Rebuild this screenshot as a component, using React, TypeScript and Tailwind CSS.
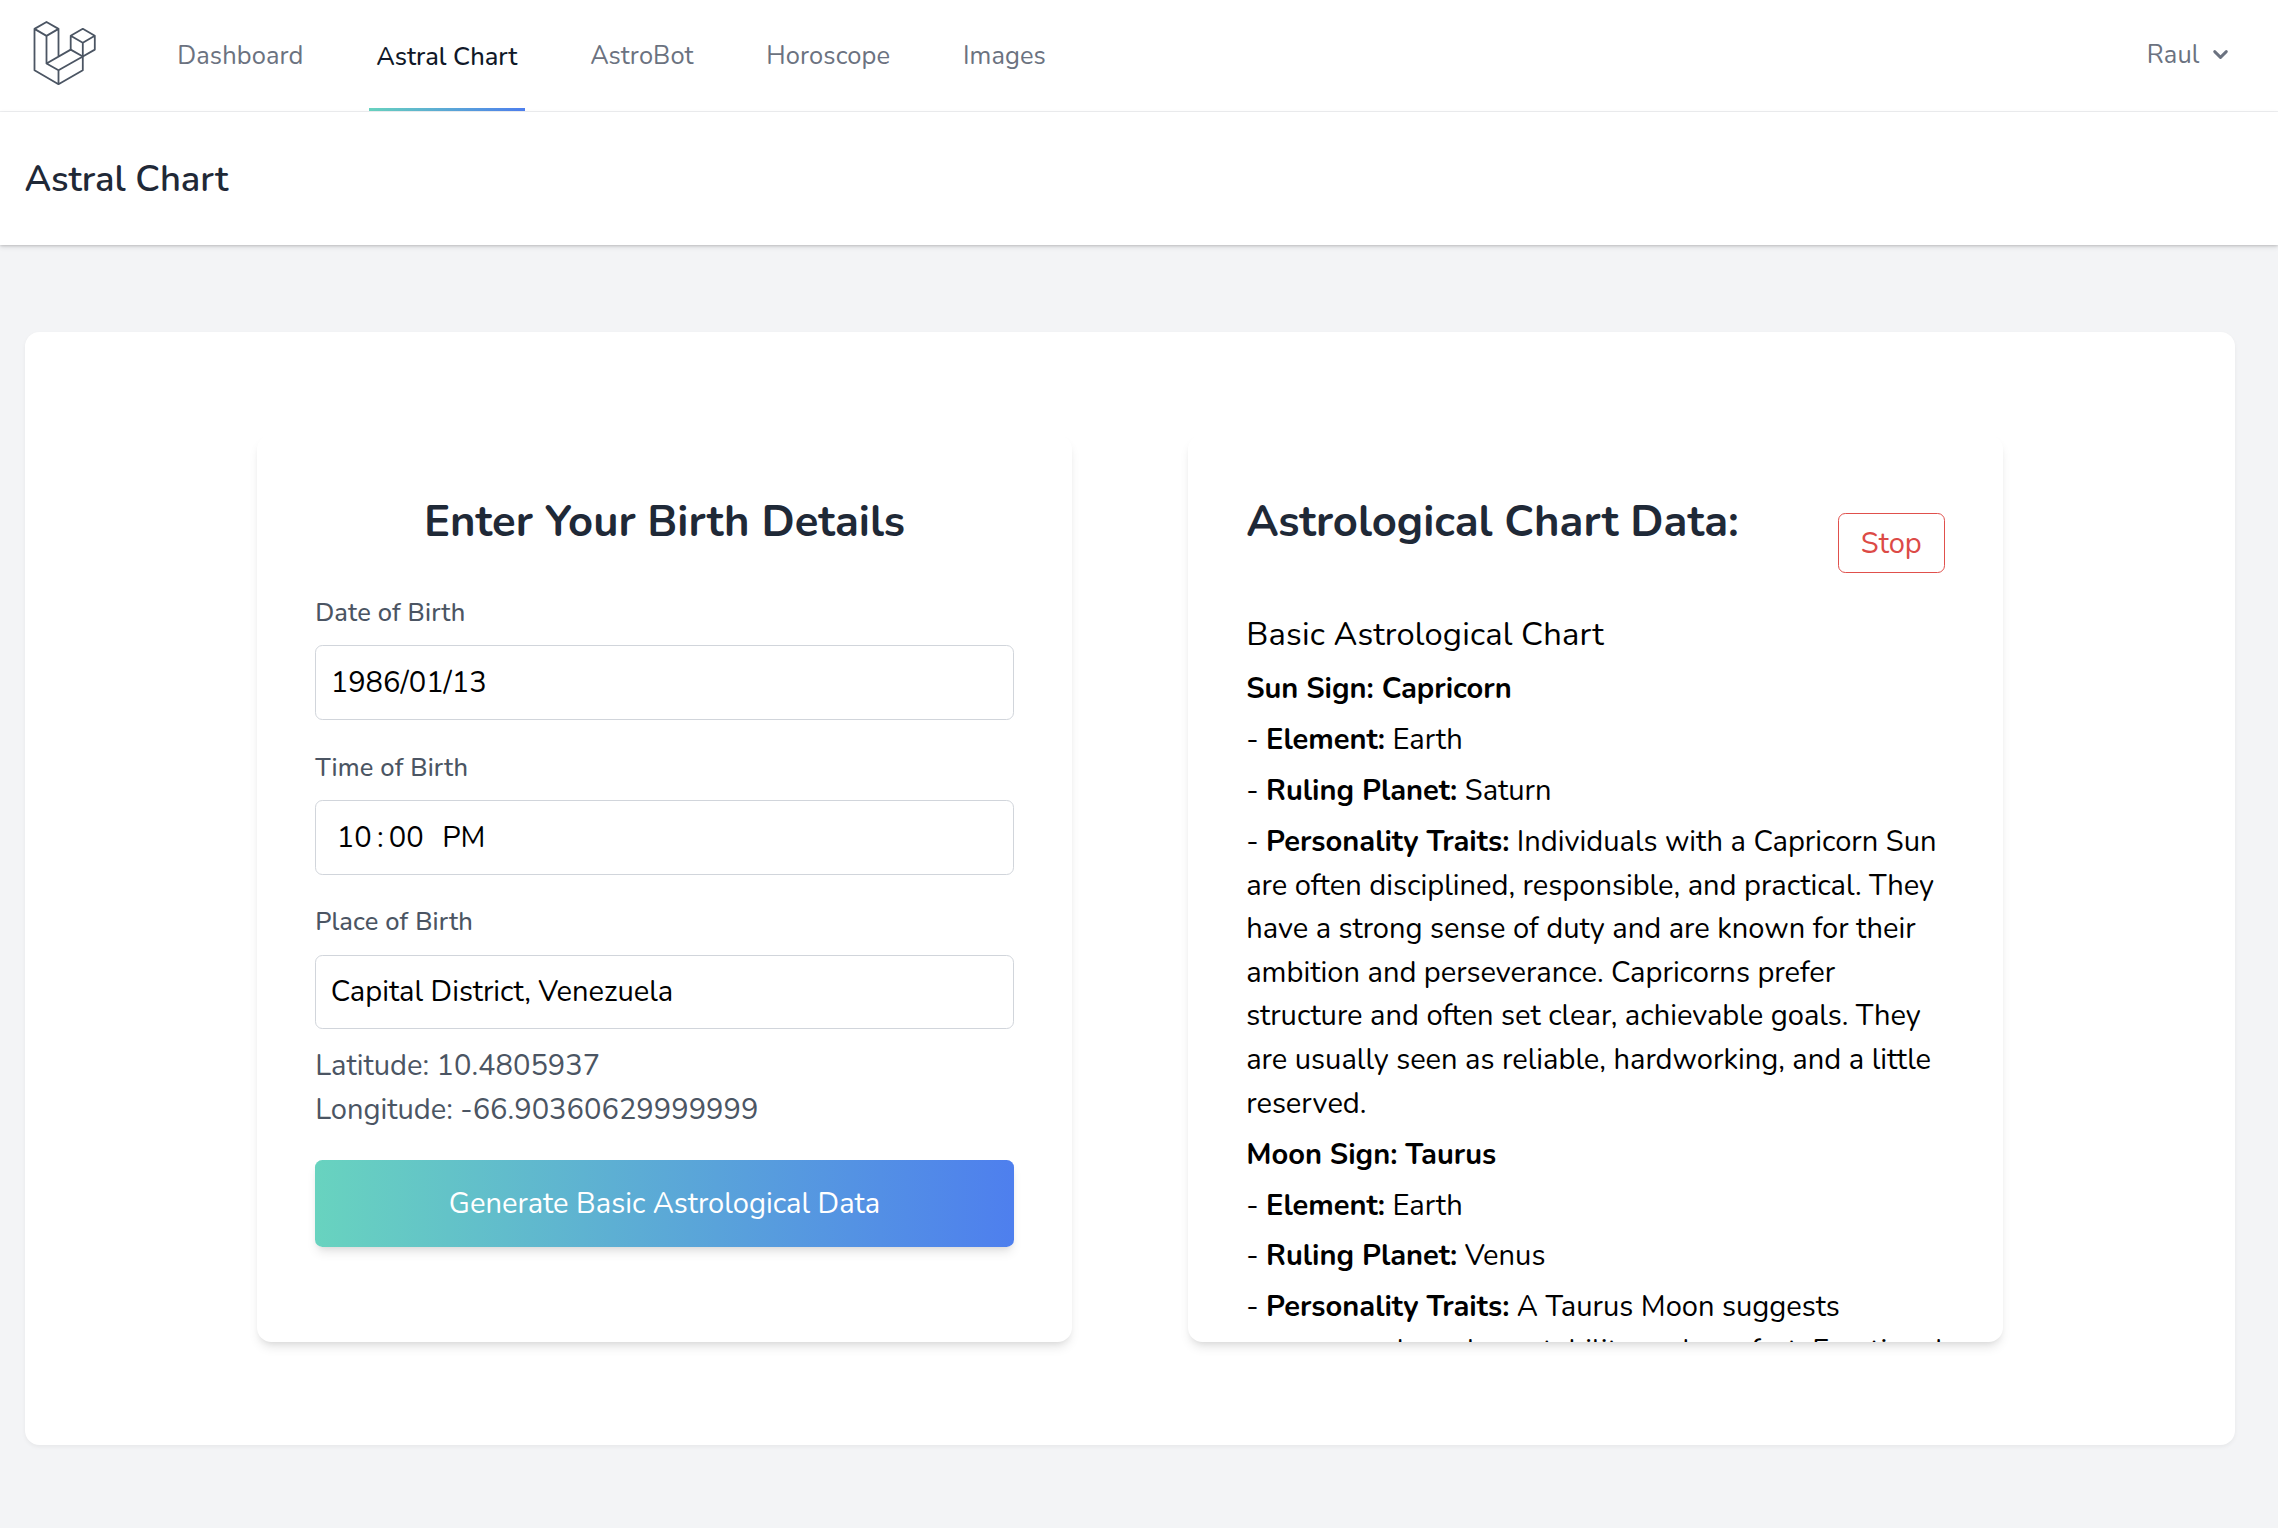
import React from "react";

const links = ["Dashboard", "Astral Chart", "AstroBot", "Horoscope", "Images"];

function Logo() {
  return (
    <svg viewBox="0 0 64 65" className="mb-[5px] ml-[32.5px] h-[65px] w-16 flex-none" fill="none" stroke="#4b5563" strokeWidth="1.8" strokeLinejoin="round">
      <path d="M1.5 7.9 13.5 1 25.5 7.9 13.5 14.9zM1.5 7.9V49.3L25.5 63.2 49.8 49.3V35.5M13.5 14.9V42.5L25.5 49.3V63.2M25.5 7.9V35.5M13.5 42.5 37.7 28.6 49.8 35.5 25.5 49.3" />
      <path d="M37.7 14.7 49.8 7.8 61.8 14.7 49.8 21.7zM37.7 14.7V28.6M49.8 21.7V35.5L61.8 28.6V14.7" />
    </svg>
  );
}

function Chevron() {
  return (
    <svg viewBox="0 0 20 20" className="ml-[6.5px] size-[29px] fill-current">
      <path
        fillRule="evenodd"
        clipRule="evenodd"
        d="M5.293 7.293a1 1 0 011.414 0L10 10.586l3.293-3.293a1 1 0 111.414 1.414l-4 4a1 1 0 01-1.414 0l-4-4a1 1 0 010-1.414z"
      />
    </svg>
  );
}

function NavLink({ label, active }: { label: string; active: boolean }) {
  if (active) {
    return (
      <a className="flex h-full flex-col font-medium text-gray-900">
        <span className="flex flex-1 items-center px-[7.3px] pt-[7px]">{label}</span>
        <span className="h-[3px] bg-linear-to-r/srgb from-[#68d3bf] to-[#4e7fee]" />
      </a>
    );
  }
  return <a className="flex h-full items-center px-[7.3px] pt-[2px] tracking-[0.1px] text-[#6b7280]">{label}</a>;
}

function Field({ label, children }: { label: string; children: React.ReactNode }) {
  return (
    <label className="flex flex-col">
      <span className="mt-[0.7px] mb-[13.8px] text-[25.45px]/[36.4px] font-medium tracking-[0.15px] text-[#4b5563]">{label}</span>
      <span className="flex h-[74.7px] items-center rounded-[7.3px] border border-[#d1d5db] px-[14.5px] pt-[0.5px]">{children}</span>
    </label>
  );
}

function Card({ children }: { children: React.ReactNode }) {
  return (
    <section className="h-[907.5px] w-[815px] overflow-hidden rounded-[14.5px] bg-white px-[58.2px] pt-[58.2px] shadow-[0_7px_11px_-2px_rgba(0,0,0,0.1),0_4px_7px_-4px_rgba(0,0,0,0.1)]">
      {children}
    </section>
  );
}

const signs = [
  {
    title: "Sun Sign: Capricorn",
    element: "Earth",
    planet: "Saturn",
    traits:
      "Individuals with a Capricorn Sun are often disciplined, responsible, and practical. They have a strong sense of duty and are known for their ambition and perseverance. Capricorns prefer structure and often set clear, achievable goals. They are usually seen as reliable, hardworking, and a little reserved.",
  },
  {
    title: "Moon Sign: Taurus",
    element: "Earth",
    planet: "Venus",
    traits: "A Taurus Moon suggests someone who values stability and comfort. Emotional",
  },
];

function Trait({ name, value }: { name: string; value: string }) {
  return (
    <p>
      - <strong>{name}:</strong> {value}
    </p>
  );
}

export default function App() {
  return (
    <div className="h-[1528px] overflow-hidden bg-[#f3f4f6] font-['Nunito','Lato',sans-serif] text-[29.09px]/[43.64px] text-black">
      <nav className="flex h-28 items-center border-b border-[#f0f1f3] bg-white text-[25.45px]/[36.4px]">
        <Logo />
        <div className="ml-[73.5px] flex h-full flex-1 gap-[58.2px]">
          {links.map((l) => (
            <NavLink key={l} label={l} active={l === "Astral Chart"} />
          ))}
        </div>
        <button className="mr-[43px] mb-[3px] flex items-center tracking-[0.12px] text-[#6b7280]">
          <span className="pt-[2px]">Raul</span>
          <Chevron />
        </button>
      </nav>

      <header className="relative flex h-[133px] items-center bg-white pl-[24.5px] shadow-[0_2px_5px_0_rgba(0,0,0,0.12),0_1px_2px_0_rgba(0,0,0,0.12)]">
        <h2 className="text-[36.36px]/[44px] font-semibold text-[#1f2937]">Astral Chart</h2>
      </header>

      <main className="mt-[87px] mr-[43px] ml-[25px] flex h-[1113px] justify-center gap-[116px] rounded-[14.5px] bg-white pt-[102.5px] shadow-[0_2px_4px_0_rgba(0,0,0,0.05)]">
        <Card>
          <h1 className="pt-[0.6px] mb-[43px] text-center text-[43.64px]/[58.2px] font-bold text-[#1f2937]">Enter Your Birth Details</h1>
          <form className="flex flex-col gap-[29px]">
            <Field label="Date of Birth">1986/01/13</Field>
            <Field label="Time of Birth">
              <span className="ml-[6px]">10</span>
              <span className="ml-[5.5px]">:</span>
              <span className="ml-[5px]">00</span>
              <span className="ml-[18.5px]">PM</span>
            </Field>
            <Field label="Place of Birth">Capital District, Venezuela</Field>
          </form>
          <div className="mt-[15px] mb-[28px] text-[#4b5563]">
            <p>Latitude: 10.4805937</p>
            <p>Longitude: -66.90360629999999</p>
          </div>
          <button className="h-[87px] w-full rounded-[7.3px] bg-linear-to-r/srgb from-[#68d3bf] to-[#4e7fee] pt-px text-white shadow-[0_7px_11px_-2px_rgba(0,0,0,0.1),0_4px_7px_-4px_rgba(0,0,0,0.1)]">
            Generate Basic Astrological Data
          </button>
        </Card>

        <Card>
          <div className="flex h-[101.8px] items-center justify-between">
            <h1 className="mb-[42.4px] text-[43.64px]/[58.2px] font-bold text-[#1f2937]">Astrological Chart Data:</h1>
            <button className="mb-[1.5px] h-[60px] w-[107px] rounded-[7.3px] border border-[#e0504c] pt-[2px] text-[#dc4a46]">Stop</button>
          </div>
          <div className="mt-[14.5px] flex flex-col gap-[7.27px]">
            <h3 className="pt-[1.5px] text-[32.73px]/[49.4px] tracking-[0.17px]">Basic Astrological Chart</h3>
            {signs.map((s) => (
              <React.Fragment key={s.title}>
                <p className="font-bold">{s.title}</p>
                <Trait name="Element" value={s.element} />
                <Trait name="Ruling Planet" value={s.planet} />
                <Trait name="Personality Traits" value={s.traits} />
              </React.Fragment>
            ))}
          </div>
        </Card>
      </main>
    </div>
  );
}
